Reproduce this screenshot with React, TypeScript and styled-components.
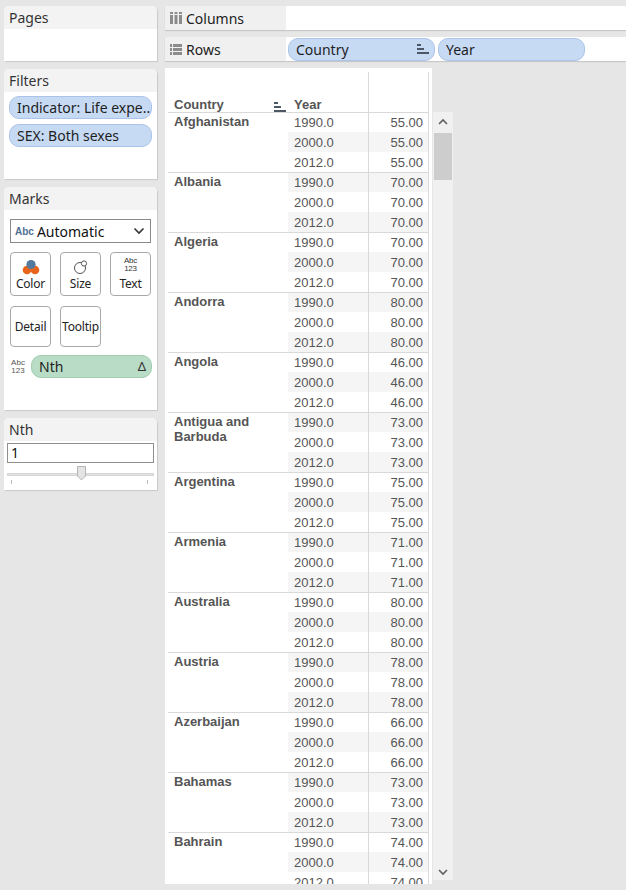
import React from "react";
import styled, { createGlobalStyle } from "styled-components";

const Global = createGlobalStyle`
  html, body { margin: 0; padding: 0; background: #e6e6e6; }
  body { font-family: "Noto Sans", "Open Sans", sans-serif; overflow: hidden; }
  * { box-sizing: border-box; }
`;

const Page = styled.div`
  display: flex;
  gap: 8px;
  padding: 6px 0 0 4px;
  width: 626px;
  height: 890px;
  overflow: hidden;
`;

const Side = styled.div`
  width: 153px;
  display: flex;
  flex-direction: column;
  gap: 8px;
  flex: none;
`;

const Card = styled.div<{ $h: number }>`
  height: ${(p) => p.$h}px;
  background: #fff;
  border-radius: 5px 5px 0 0;
  box-shadow: 1px 1px 1px #c8c8c8;
  display: flex;
  flex-direction: column;
  overflow: hidden;
`;

const CardHead = styled.div`
  height: 23px;
  background: #f3f3f3;
  padding: 0 5px;
  font-size: 14px;
  line-height: 23px;
  color: #333;
  flex: none;
`;

const CardBody = styled.div`
  padding: 4px 5px;
  display: flex;
  flex-direction: column;
  gap: 5px;
`;

const Pill = styled.div<{ $w?: number; $green?: boolean }>`
  height: 23px;
  ${(p) => (p.$w ? `width: ${p.$w}px;` : "")}
  background: ${(p) => (p.$green ? "#b9dcc6" : "#c7daf4")};
  border: 1px solid ${(p) => (p.$green ? "#a3cdb2" : "#aac3e8")};
  border-radius: 10px;
  padding: 0 5px 0 7px;
  font-size: 14px;
  line-height: 21px;
  color: #1e1e1e;
  white-space: nowrap;
  overflow: hidden;
  display: flex;
  align-items: center;
  justify-content: space-between;
  flex: none;
`;

const Select = styled.div`
  margin: 5px 1px 0;
  height: 24px;
  border: 1px solid #8a8a8a;
  display: flex;
  align-items: center;
  padding: 0 5px 0 4px;
  font-size: 14px;
  color: #111;
  gap: 3px;
`;

const AbcTag = styled.span`
  font-family: "Liberation Sans", Arial, sans-serif;
  font-size: 10px;
  font-weight: bold;
  color: #4f6f93;
`;

const Grow = styled.span`
  flex: 1;
`;

const MarkGrid = styled.div`
  display: grid;
  grid-template-columns: repeat(3, 41px);
  grid-template-rows: 44px 41px;
  column-gap: 9px;
  row-gap: 10px;
  margin: 4px 1px 0;
`;

const MarkBtn = styled.div<{ $short?: boolean }>`
  border: 1px solid #a9a9a9;
  border-radius: 4px;
  display: flex;
  flex-direction: column;
  align-items: center;
  justify-content: ${(p) => (p.$short ? "center" : "flex-end")};
  padding-bottom: ${(p) => (p.$short ? 0 : 3)}px;
  font-size: 12px;
  color: #222;
  letter-spacing: -0.2px;
`;

const StackTxt = styled.div<{ $c?: string }>`
  font-family: "Liberation Sans", Arial, sans-serif;
  font-size: 8px;
  line-height: 8px;
  color: ${(p) => p.$c || "#444"};
  text-align: center;
  margin-bottom: 2px;
`;

const NthRow = styled.div`
  display: flex;
  align-items: center;
  gap: 5px;
  margin: 3px 0 0 1px;
`;

const NthIcon = styled(StackTxt)`
  width: 20px;
  margin: 0;
  color: #555;
`;

const Delta = styled.span`
  font-size: 13px;
  color: #333;
`;

const Input = styled.div`
  margin: 2px 3px 0;
  height: 20px;
  border: 1px solid #8f8f8f;
  font-size: 14px;
  line-height: 18px;
  padding-left: 3px;
  color: #111;
`;

const Slider = styled.div`
  position: relative;
  margin: 10px 3px 0;
  height: 14px;
`;

const Track = styled.div`
  height: 3px;
  background: #e2e2e2;
  border: 1px solid #d6d6d6;
`;

const Thumb = styled.svg`
  position: absolute;
  left: 70px;
  top: -7px;
`;

const Tick = styled.div<{ $l: number }>`
  position: absolute;
  left: ${(p) => p.$l}px;
  top: 7px;
  width: 1px;
  height: 4px;
  background: #bbb;
`;

const Main = styled.div`
  flex: 1;
  display: flex;
  flex-direction: column;
  gap: 7px;
  min-width: 0;
`;

const Shelf = styled.div`
  height: 24px;
  display: flex;
  background: #fff;
  box-shadow: 0 1px 1px #c8c8c8;
  flex: none;
`;

const ShelfLabel = styled.div`
  width: 121px;
  background: #f0f0f0;
  display: flex;
  align-items: center;
  gap: 4px;
  padding-left: 5px;
  font-size: 14px;
  color: #222;
  flex: none;
`;

const ShelfPills = styled.div`
  display: flex;
  align-items: center;
  gap: 3px;
  padding-left: 2px;
`;

const ViewRow = styled.div`
  display: flex;
  gap: 1px;
  align-items: flex-start;
`;

const View = styled.div`
  width: 267px;
  height: 816px;
  background: #fff;
  padding-left: 3px;
  overflow: hidden;
  flex: none;
`;

const Table = styled.div`
  width: 261px;
  font-family: "Liberation Sans", Arial, sans-serif;
  font-size: 13px;
  color: #555;
`;

const HeadRow = styled.div`
  height: 45px;
  display: flex;
  padding-top: 4px;
  border-bottom: 1px solid #d9d9d9;
`;

const HeadCell = styled.div<{ $w: number; $line?: boolean }>`
  width: ${(p) => p.$w}px;
  display: flex;
  align-items: flex-end;
  justify-content: space-between;
  padding: 0 2px 0 6px;
  font-weight: bold;
  ${(p) => (p.$line ? "border-left: 1px solid #d9d9d9; border-right: 1px solid #d9d9d9;" : "")}
`;

const Group = styled.div`
  display: flex;
  border-bottom: 1px solid #d9d9d9;
`;

const CountryCell = styled.div`
  width: 120px;
  padding: 1px 6px 0;
  font-weight: bold;
  line-height: 15px;
  flex: none;
`;

const Rows = styled.div`
  flex: 1;
  display: flex;
  flex-direction: column;
`;

const DataRow = styled.div<{ $band: boolean; $h: number }>`
  height: ${(p) => p.$h}px;
  display: flex;
  background: ${(p) => (p.$band ? "#f5f5f5" : "#fff")};
`;

const YearCell = styled.div`
  width: 80px;
  padding-left: 6px;
  display: flex;
  align-items: center;
`;

const ValCell = styled.div`
  width: 61px;
  border-left: 1px solid #d9d9d9;
  border-right: 1px solid #d9d9d9;
  display: flex;
  align-items: center;
  justify-content: flex-end;
  padding-right: 5px;
`;

const Scroll = styled.div`
  margin-top: 44px;
  width: 20px;
  height: 768px;
  background: #f0f0f0;
  display: flex;
  flex-direction: column;
  align-items: center;
  justify-content: space-between;
  padding: 6px 0 4px;
  flex: none;
`;

const ThumbBar = styled.div`
  width: 18px;
  height: 47px;
  background: #cdcdcd;
  margin-top: 7px;
`;

const ScrollTop = styled.div`
  display: flex;
  flex-direction: column;
  align-items: center;
`;

const Chev = ({ up }: { up?: boolean }) => (
  <svg width="10" height="8" viewBox="0 0 10 8">
    <path
      d={up ? "M1 6 L5 2 L9 6" : "M1 2 L5 6 L9 2"}
      fill="none"
      stroke="#606060"
      strokeWidth="1.6"
    />
  </svg>
);

const SortIcon = () => (
  <svg width="12" height="10" viewBox="0 0 12 10">
    <rect x="0" y="0" width="4" height="2" fill="#4d5766" />
    <rect x="0" y="4" width="7" height="2" fill="#4d5766" />
    <rect x="0" y="8" width="12" height="2" fill="#4d5766" />
  </svg>
);

const ColsIcon = () => (
  <svg width="12" height="12" viewBox="0 0 12 12">
    {[0, 4.5, 9].map((x) => (
      <g key={x} fill="#8c8c8c">
        <rect x={x} y="0" width="3" height="2" />
        <rect x={x} y="3" width="3" height="9" />
      </g>
    ))}
  </svg>
);

const RowsIcon = () => (
  <svg width="12" height="11" viewBox="0 0 12 11">
    {[0, 4, 8].map((y) => (
      <g key={y} fill="#8c8c8c">
        <rect x="0" y={y} width="2" height="3" />
        <rect x="3" y={y} width="9" height="3" />
      </g>
    ))}
  </svg>
);

const ColorIcon = () => (
  <svg width="18" height="16" viewBox="0 0 18 16">
    <circle cx="5" cy="11" r="4.3" fill="#e8641b" />
    <circle cx="13" cy="11" r="4.3" fill="#e8641b" />
    <circle cx="9" cy="5.5" r="4.6" fill="#53799f" />
  </svg>
);

const SizeIcon = () => (
  <svg width="16" height="16" viewBox="0 0 16 16">
    <circle cx="7" cy="9" r="5.5" fill="none" stroke="#555" strokeWidth="1" />
    <circle cx="11" cy="4.5" r="2.6" fill="#fff" stroke="#555" strokeWidth="1" />
  </svg>
);

const DownChev = () => (
  <svg width="12" height="8" viewBox="0 0 12 8">
    <path d="M1.5 1.5 L6 6 L10.5 1.5" fill="none" stroke="#333" strokeWidth="1.6" />
  </svg>
);

const data: [string, string][] = [
  ["Afghanistan", "55.00"],
  ["Albania", "70.00"],
  ["Algeria", "70.00"],
  ["Andorra", "80.00"],
  ["Angola", "46.00"],
  ["Antigua and Barbuda", "73.00"],
  ["Argentina", "75.00"],
  ["Armenia", "71.00"],
  ["Australia", "80.00"],
  ["Austria", "78.00"],
  ["Azerbaijan", "66.00"],
  ["Bahamas", "73.00"],
  ["Bahrain", "74.00"],
];

const years = ["1990.0", "2000.0", "2012.0"];

export default function App() {
  return (
    <>
      <Global />
      <Page>
        <Side>
          <Card $h={55}>
            <CardHead>Pages</CardHead>
          </Card>
          <Card $h={110}>
            <CardHead>Filters</CardHead>
            <CardBody>
              <Pill>Indicator: Life expe..</Pill>
              <Pill>SEX: Both sexes</Pill>
            </CardBody>
          </Card>
          <Card $h={223}>
            <CardHead>Marks</CardHead>
            <CardBody>
              <Select>
                <AbcTag>Abc</AbcTag>
                <Grow>Automatic</Grow>
                <DownChev />
              </Select>
              <MarkGrid>
                <MarkBtn>
                  <ColorIcon />
                  <span>Color</span>
                </MarkBtn>
                <MarkBtn>
                  <SizeIcon />
                  <span>Size</span>
                </MarkBtn>
                <MarkBtn>
                  <StackTxt $c="#333">
                    Abc
                    <br />
                    123
                  </StackTxt>
                  <span>Text</span>
                </MarkBtn>
                <MarkBtn $short>Detail</MarkBtn>
                <MarkBtn $short>Tooltip</MarkBtn>
              </MarkGrid>
              <NthRow>
                <NthIcon>
                  Abc
                  <br />
                  123
                </NthIcon>
                <Pill $green $w={121}>
                  <span>Nth</span>
                  <Delta>Δ</Delta>
                </Pill>
              </NthRow>
            </CardBody>
          </Card>
          <Card $h={72}>
            <CardHead>Nth</CardHead>
            <Input>1</Input>
            <Slider>
              <Track />
              <Thumb width="9" height="15" viewBox="0 0 9 15">
                <path d="M0.5 0.5 H8.5 V10 L4.5 14 L0.5 10 Z" fill="#e4e4e4" stroke="#b5b5b5" />
              </Thumb>
              <Tick $l={4} />
              <Tick $l={140} />
            </Slider>
          </Card>
        </Side>
        <Main>
          <Shelf>
            <ShelfLabel>
              <ColsIcon />
              Columns
            </ShelfLabel>
          </Shelf>
          <Shelf>
            <ShelfLabel>
              <RowsIcon />
              Rows
            </ShelfLabel>
            <ShelfPills>
              <Pill $w={147}>
                <span>Country</span>
                <SortIcon />
              </Pill>
              <Pill $w={147}>Year</Pill>
            </ShelfPills>
          </Shelf>
          <ViewRow>
            <View>
              <Table>
                <HeadRow>
                  <HeadCell $w={120}>
                    <span>Country</span>
                    <SortIcon />
                  </HeadCell>
                  <HeadCell $w={80}>Year</HeadCell>
                  <HeadCell $w={61} $line />
                </HeadRow>
                {data.map(([c, v], gi) => (
                  <Group key={c}>
                    <CountryCell>{c}</CountryCell>
                    <Rows>
                      {years.map((y, ri) => (
                        <DataRow key={y} $band={(gi * 3 + ri) % 2 === 1} $h={ri === 0 ? 19 : 20}>
                          <YearCell>{y}</YearCell>
                          <ValCell>{v}</ValCell>
                        </DataRow>
                      ))}
                    </Rows>
                  </Group>
                ))}
              </Table>
            </View>
            <Scroll>
              <ScrollTop>
                <Chev up />
                <ThumbBar />
              </ScrollTop>
              <Chev />
            </Scroll>
          </ViewRow>
        </Main>
      </Page>
    </>
  );
}
